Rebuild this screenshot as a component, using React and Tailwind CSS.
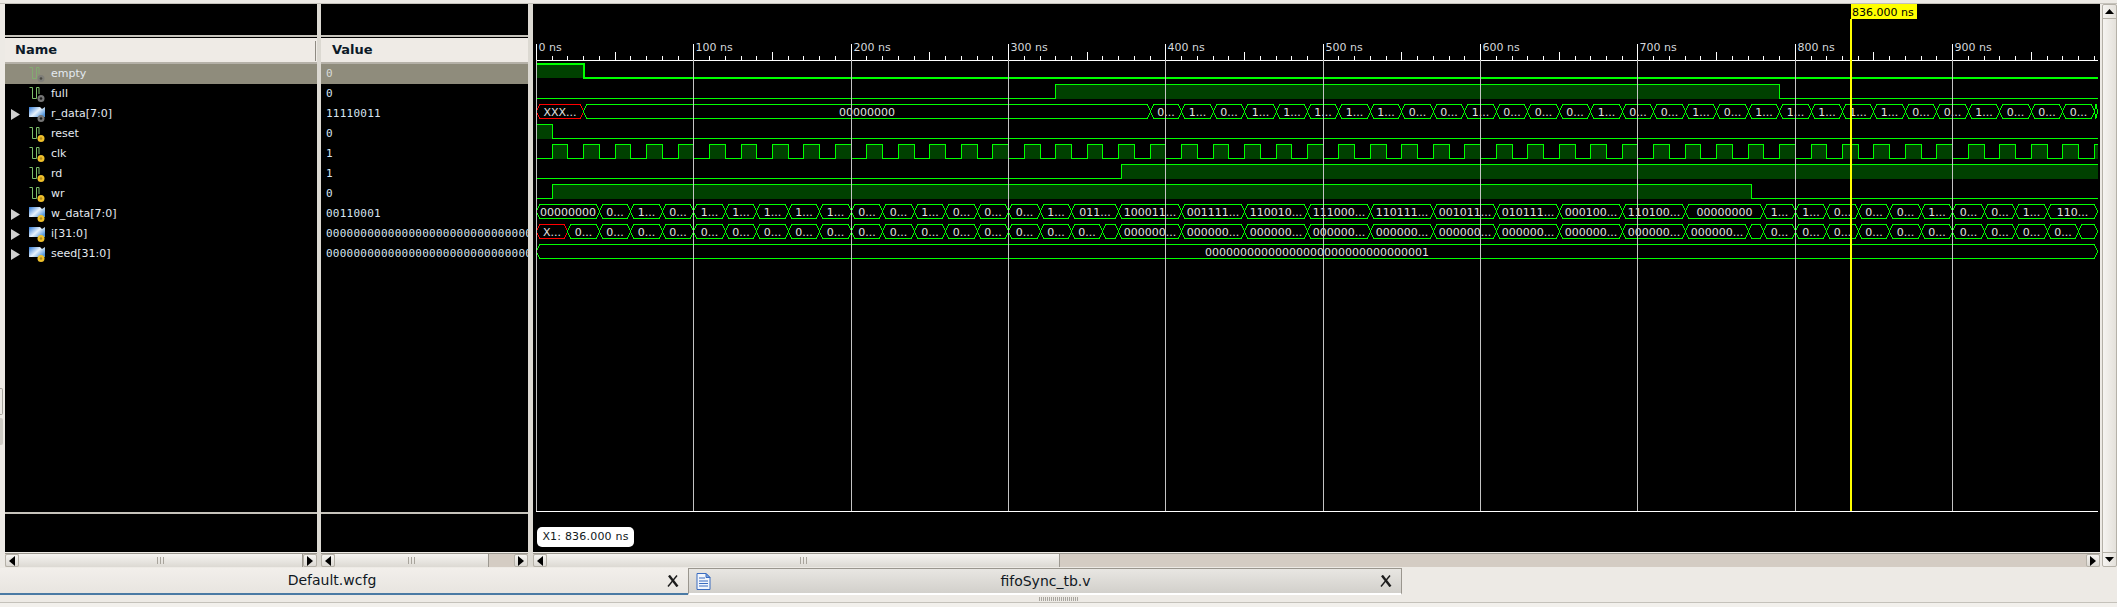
const rows = [
  { name: 'empty', value: '0', kind: 'bit', badge: 'gray', selected: true },
  { name: 'full', value: '0', kind: 'bit', badge: 'gray' },
  { name: 'r_data[7:0]', value: '11110011', kind: 'bus', badge: 'gray' },
  { name: 'reset', value: '0', kind: 'bit', badge: 'gold' },
  { name: 'clk', value: '1', kind: 'bit', badge: 'gold' },
  { name: 'rd', value: '1', kind: 'bit', badge: 'gold' },
  { name: 'wr', value: '0', kind: 'bit', badge: 'gold' },
  { name: 'w_data[7:0]', value: '00110001', kind: 'bus', badge: 'gold' },
  { name: 'i[31:0]', value: '00000000000000000000000000000000', kind: 'bus', badge: 'gold' },
  { name: 'seed[31:0]', value: '00000000000000000000000000000000', kind: 'bus', badge: 'gold' },
];

const END = 992;
const tx = (t) => Math.round(536 + t * 1.5735) + 0.5;

// one bit per 20 ns box
const steps = (start, bits) =>
  bits.split('').map((b, i) => [start + i * 20, start + (i + 1) * 20, b + '...']);

const rData = [
  [0, 30, 'XXX...', true],
  [30, 390, '00000000'],
  ...steps(390, '010111110010001001011111001000'),
  [990, END, ''],
];

const wData = [
  [0, 40, '00000000'],
  ...steps(40, '010111110010001'),
  [340, 370, '011...'],
  [370, 410, '100011...'],
  [410, 450, '001111...'],
  [450, 490, '110010...'],
  [490, 530, '111000...'],
  [530, 570, '110111...'],
  [570, 610, '001011...'],
  [610, 650, '010111...'],
  [650, 690, '000100...'],
  [690, 730, '110100...'],
  [730, 780, '00000000'],
  ...steps(780, '110001001'),
  [960, END, '110...'],
];

const iData = [
  [0, 20, 'X...', true],
  ...steps(20, '00000000000000000'),
  [360, 370, ''],
  ...[370, 410, 450, 490, 530, 570, 610, 650, 690, 730].map((t) => [t, t + 40, '000000...']),
  [770, 780, ''],
  ...steps(780, '000000000'),
  [960, 980, '0...'],
  [980, END, ''],
];

const seedData = [[0, END, '00000000000000000000000000000001']];

function clockEdges() {
  const out = [[0, 0]];
  for (let t = 10; t < END; t += 10) out.push([t, out.length % 2]);
  return out;
}

function BitWave({ top, bottom, edges, thick }) {
  const pts = [];
  const fills = [];
  edges.forEach(([t, v], i) => {
    const next = i + 1 < edges.length ? edges[i + 1][0] : END;
    const y = v ? top : bottom;
    pts.push(`${tx(t)},${y}`, `${tx(next)},${y}`);
    if (v) fills.push([tx(t), tx(next)]);
  });
  return (
    <g shapeRendering="crispEdges">
      {fills.map(([a, b]) => (
        <rect key={a} x={a} y={top} width={b - a} height={bottom - top} fill="#004000" />
      ))}
      <polyline points={pts.join(' ')} fill="none" stroke="#00ff00" strokeWidth={thick ? 2 : 1} />
    </g>
  );
}

function BusWave({ top, segs }) {
  const bottom = top + 14;
  const mid = top + 7;
  return (
    <g>
      {segs.map(([a, b, label, bad]) => {
        const x0 = tx(a);
        const x1 = tx(b);
        const s = Math.min(3, (x1 - x0) / 2);
        const points = `${x0},${mid} ${x0 + s},${top} ${x1 - s},${top} ${x1},${mid} ${x1 - s},${bottom} ${x0 + s},${bottom}`;
        return (
          <g key={a}>
            <polygon points={points} fill="none" stroke={bad ? '#ff0000' : '#00ff00'} shapeRendering="crispEdges" />
            {label && (
              <text x={(x0 + x1) / 2} y={top + 11} textAnchor="middle" fill="#e0e0e0">
                {label}
              </text>
            )}
          </g>
        );
      })}
    </g>
  );
}

function Waves() {
  const ticks = [];
  for (let t = 0; t <= 990; t += 10) ticks.push(t);
  const hundreds = ticks.filter((t) => t % 100 === 0);
  return (
    <svg width="1567" height="549" viewBox="533 4 1567 549" className="block text-[11px]">
      <BitWave top={63.5} bottom={78} edges={[[0, 1], [30, 0]]} thick />
      <BitWave top={84.5} bottom={98.5} edges={[[0, 0], [330, 1], [790, 0]]} />
      <BusWave top={104.5} segs={rData} />
      <BitWave top={124.5} bottom={138.5} edges={[[0, 1], [10, 0]]} />
      <BitWave top={144.5} bottom={158.5} edges={clockEdges()} />
      <BitWave top={164.5} bottom={178.5} edges={[[0, 0], [372, 1]]} />
      <BitWave top={184.5} bottom={198.5} edges={[[0, 0], [10, 1], [772, 0]]} />
      <BusWave top={204.5} segs={wData} />
      <BusWave top={224.5} segs={iData} />
      <BusWave top={244.5} segs={seedData} />

      {/* ruler */}
      <g shapeRendering="crispEdges">
        {ticks.map((t) => (
          <line
            key={t}
            x1={tx(t)}
            x2={tx(t)}
            y1={t % 100 === 0 ? 44 : t % 50 === 0 ? 52 : 56}
            y2="60"
            stroke="#ffffff"
          />
        ))}
        <line x1="536" x2="2098" y1="60.5" y2="60.5" stroke="#ffffff" />
        {hundreds.map((t) => (
          <line key={t} x1={tx(t)} x2={tx(t)} y1="60" y2="511" stroke="#c4c4c4" />
        ))}
        <line x1="536" x2="2098" y1="511.5" y2="511.5" stroke="#ffffff" />
      </g>
      {hundreds.map((t) => (
        <text key={t} x={tx(t) + 2} y="51" fill="#d4d8dc">
          {t} ns
        </text>
      ))}

      {/* cursor */}
      <rect x="1850" y="19" width="2" height="492" fill="#ffff00" />
      <rect x="1851" y="4" width="66" height="15" fill="#ffff00" />
      <text x="1852" y="16" fill="#000000">836.000 ns</text>
    </svg>
  );
}

function SignalIcon({ kind, badge, dim }) {
  const ring = badge === 'gold' ? '#eec02c' : '#767676';
  const core = badge === 'gold' ? '#b08a1c' : '#1c1c1c';
  return (
    <svg width="17" height="17" viewBox="0 0 17 17" className={dim ? 'opacity-60' : ''}>
      <defs>
        <linearGradient id="busFill" x1="0" y1="0" x2="1" y2="0.7">
          <stop offset="0" stopColor="#2f79d6" />
          <stop offset="0.55" stopColor="#e9f3fc" />
          <stop offset="1" stopColor="#4f93dc" />
        </linearGradient>
      </defs>
      {kind === 'bit' ? (
        <path d="M0.5 1.5H3.5V12.5H7.5V1.5H10V8" fill="none" stroke="#7cc06a" strokeWidth="1" />
      ) : (
        <path d="M0 1H11L13 3L16 1V11H0Z" fill="url(#busFill)" />
      )}
      <circle cx="12" cy="12.5" r="3.5" fill={ring} />
      <circle cx="12" cy="12.5" r="1.3" fill={core} />
    </svg>
  );
}

function NameRow({ row }) {
  return (
    <div className={`flex h-5 items-center ${row.selected ? 'bg-[#8f8c7c]' : ''}`}>
      <div className="flex w-[24px] justify-end pr-[9px]">
        {row.kind === 'bus' && (
          <svg width="9" height="11" viewBox="0 0 9 11">
            <polygon points="0,0 9,5.5 0,11" fill="#d0d0d0" />
          </svg>
        )}
      </div>
      <SignalIcon kind={row.kind} badge={row.badge} dim={row.selected} />
      <span className="ml-[5px] text-[11px] text-[#e4eaf0]">{row.name}</span>
    </div>
  );
}

function ValueRow({ row }) {
  return (
    <div
      className={`flex h-5 items-center overflow-hidden whitespace-nowrap pl-[5px] font-['DejaVu_Sans_Mono'] text-[11px] tracking-[0.25px] ${
        row.selected ? 'bg-[#8f8c7c] text-[#d8dcd8]' : 'text-[#d6e4f0]'
      }`}
    >
      {row.value}
    </div>
  );
}

function Arrow({ dir }) {
  const points = {
    left: '6,0 6,10 0,5',
    right: '0,0 0,10 6,5',
  }[dir];
  return (
    <div className="flex w-[14px] shrink-0 items-center justify-center rounded-[2px] border border-[#b5b1a8] bg-gradient-to-b from-[#f6f4f1] to-[#dcd9d3]">
      <svg width="6" height="10" viewBox="0 0 6 10">
        <polygon points={points} fill="#000000" />
      </svg>
    </div>
  );
}

function HScroll({ trough }) {
  return (
    <div className="mt-px flex h-[14px] shrink-0 border-t border-[#9c9890] bg-[#d4ccc3]">
      <Arrow dir="left" />
      <div className="flex flex-1 items-center justify-center gap-[2px] border-r border-[#9c9890] bg-gradient-to-b from-[#f6f4f1] to-[#dcd9d3]">
        <div className="h-[7px] w-px bg-[#a8a49c]" />
        <div className="h-[7px] w-px bg-[#a8a49c]" />
        <div className="h-[7px] w-px bg-[#a8a49c]" />
      </div>
      {trough > 0 && <div className="shrink-0" style={{ width: trough }} />}
      <Arrow dir="right" />
    </div>
  );
}

function Column({ width, title, titleGrip, titlePad, scrollTrough, children }) {
  return (
    <div className="flex h-full shrink-0 flex-col" style={{ width }}>
      <div className="h-[31px] shrink-0 bg-black" />
      <div className="h-[2px] shrink-0 bg-[#c6c3bb]" />
      <div
        className={`relative flex h-[27px] shrink-0 items-center border-t border-black border-b-2 border-b-[#b5b1a8] bg-[#efebe6] text-[13px] font-bold text-[#0c1a28] ${titlePad}`}
      >
        {title}
        {titleGrip && <div className="absolute right-[1px] top-[3px] h-[20px] w-px bg-[#8e8a82]" />}
      </div>
      <div className="flex-1 bg-black">{children}</div>
      <div className="h-[2px] shrink-0 bg-[#c6c3bb]" />
      <div className="h-[38px] shrink-0 bg-black" />
      <HScroll trough={scrollTrough} />
    </div>
  );
}

function DocIcon() {
  return (
    <svg width="15" height="17" viewBox="0 0 15 17">
      <path d="M1 0.5H10L14 4.5V16.5H1Z" fill="#f2f6fc" stroke="#3a6cc0" />
      <path d="M10 0.5V4.5H14Z" fill="#7fa6e0" stroke="#3a6cc0" />
      <path d="M3 5H9M3 8H12M3 10.5H12M3 13H12" stroke="#3a6cc0" strokeWidth="1.2" />
    </svg>
  );
}

function CloseIcon() {
  return (
    <svg width="12" height="12" viewBox="0 0 12 12">
      <path d="M2 0.5L10.5 11.5" stroke="#1c1c1c" strokeWidth="2.4" />
      <path d="M10 0.5L1 11.5" stroke="#1c1c1c" strokeWidth="1.4" />
    </svg>
  );
}

export default function App() {
  return (
    <div className="flex h-[607px] w-[2117px] flex-col overflow-hidden bg-[#edeae5] font-['DejaVu_Sans',sans-serif]">
      <div className="h-[4px] shrink-0 border-b border-[#c4c1ba]" />

      <div className="flex h-[563px] shrink-0">
        <div className="flex w-[5px] shrink-0 flex-col gap-[3px] pt-[384px]">
          <div className="h-[27px] w-[3px] rounded-r-[2px] border border-l-0 border-[#a8a59e]" />
          <div className="h-[27px] w-[3px] rounded-r-[2px] bg-[#cdcac4]" />
        </div>

        <Column width={312} title="Name" titleGrip titlePad="pl-[10px]" scrollTrough={0}>
          {rows.map((r) => (
            <NameRow key={r.name} row={r} />
          ))}
        </Column>

        <div className="w-[4px] shrink-0 bg-[#dcd9d2]" />

        <Column width={207} title="Value" titlePad="pl-[11px]" scrollTrough={25}>
          {rows.map((r) => (
            <ValueRow key={r.name} row={r} />
          ))}
        </Column>

        <div className="w-[5px] shrink-0 bg-[#dcd9d2]" />

        <div className="relative flex w-[1567px] shrink-0 flex-col">
          <div className="flex-1 overflow-hidden bg-black">
            <Waves />
          </div>
          <HScroll trough={1026} />
          <div className="absolute left-[4px] top-[523px] flex h-[20px] w-[97px] items-center justify-center rounded-[5px] bg-white text-[11px] tracking-[0.2px] text-[#101820]">
            X1: 836.000 ns
          </div>
        </div>

        <div className="ml-[2px] flex w-[15px] shrink-0 flex-col rounded-[2px] border border-[#b5b1a8] bg-gradient-to-r from-[#f6f4f1] to-[#e4e1db]">
          <div className="flex h-[14px] items-center justify-center border-b border-[#b5b1a8]">
            <svg width="9" height="5" viewBox="0 0 9 5">
              <polygon points="0,5 9,5 4.5,0" fill="#000000" />
            </svg>
          </div>
          <div className="flex-1" />
          <div className="flex h-[14px] items-center justify-center border-t border-[#b5b1a8]">
            <svg width="9" height="5" viewBox="0 0 9 5">
              <polygon points="0,0 9,0 4.5,5" fill="#000000" />
            </svg>
          </div>
        </div>
      </div>

      <div className="mt-px flex h-[27px] shrink-0 text-[14px] text-[#10181f]">
        <div className="flex w-[688px] shrink-0 items-center border-b-2 border-[#4a7aa4] bg-gradient-to-b from-[#f2efeb] to-[#e8e5e0] pr-[9px]">
          <span className="flex-1 pr-[3px] text-center">Default.wcfg</span>
          <CloseIcon />
        </div>
        <div className="flex w-[714px] shrink-0 items-center border-x border-t border-[#9a968e] border-b-2 border-b-white bg-gradient-to-b from-[#e8e6e2] to-[#d2d0cb] pl-[7px] pr-[9px]">
          <DocIcon />
          <span className="flex-1 text-center">fifoSync_tb.v</span>
          <CloseIcon />
        </div>
      </div>

      <div className="flex h-[7px] shrink-0 items-center justify-center">
        <div className="h-[4px] w-[39px] bg-[repeating-linear-gradient(90deg,#a8a59e_0,#a8a59e_1px,transparent_1px,transparent_2px)]" />
      </div>
      <div className="flex-1 border-t border-[#c4c1ba] bg-[#f2f0ec]" />
    </div>
  );
}
